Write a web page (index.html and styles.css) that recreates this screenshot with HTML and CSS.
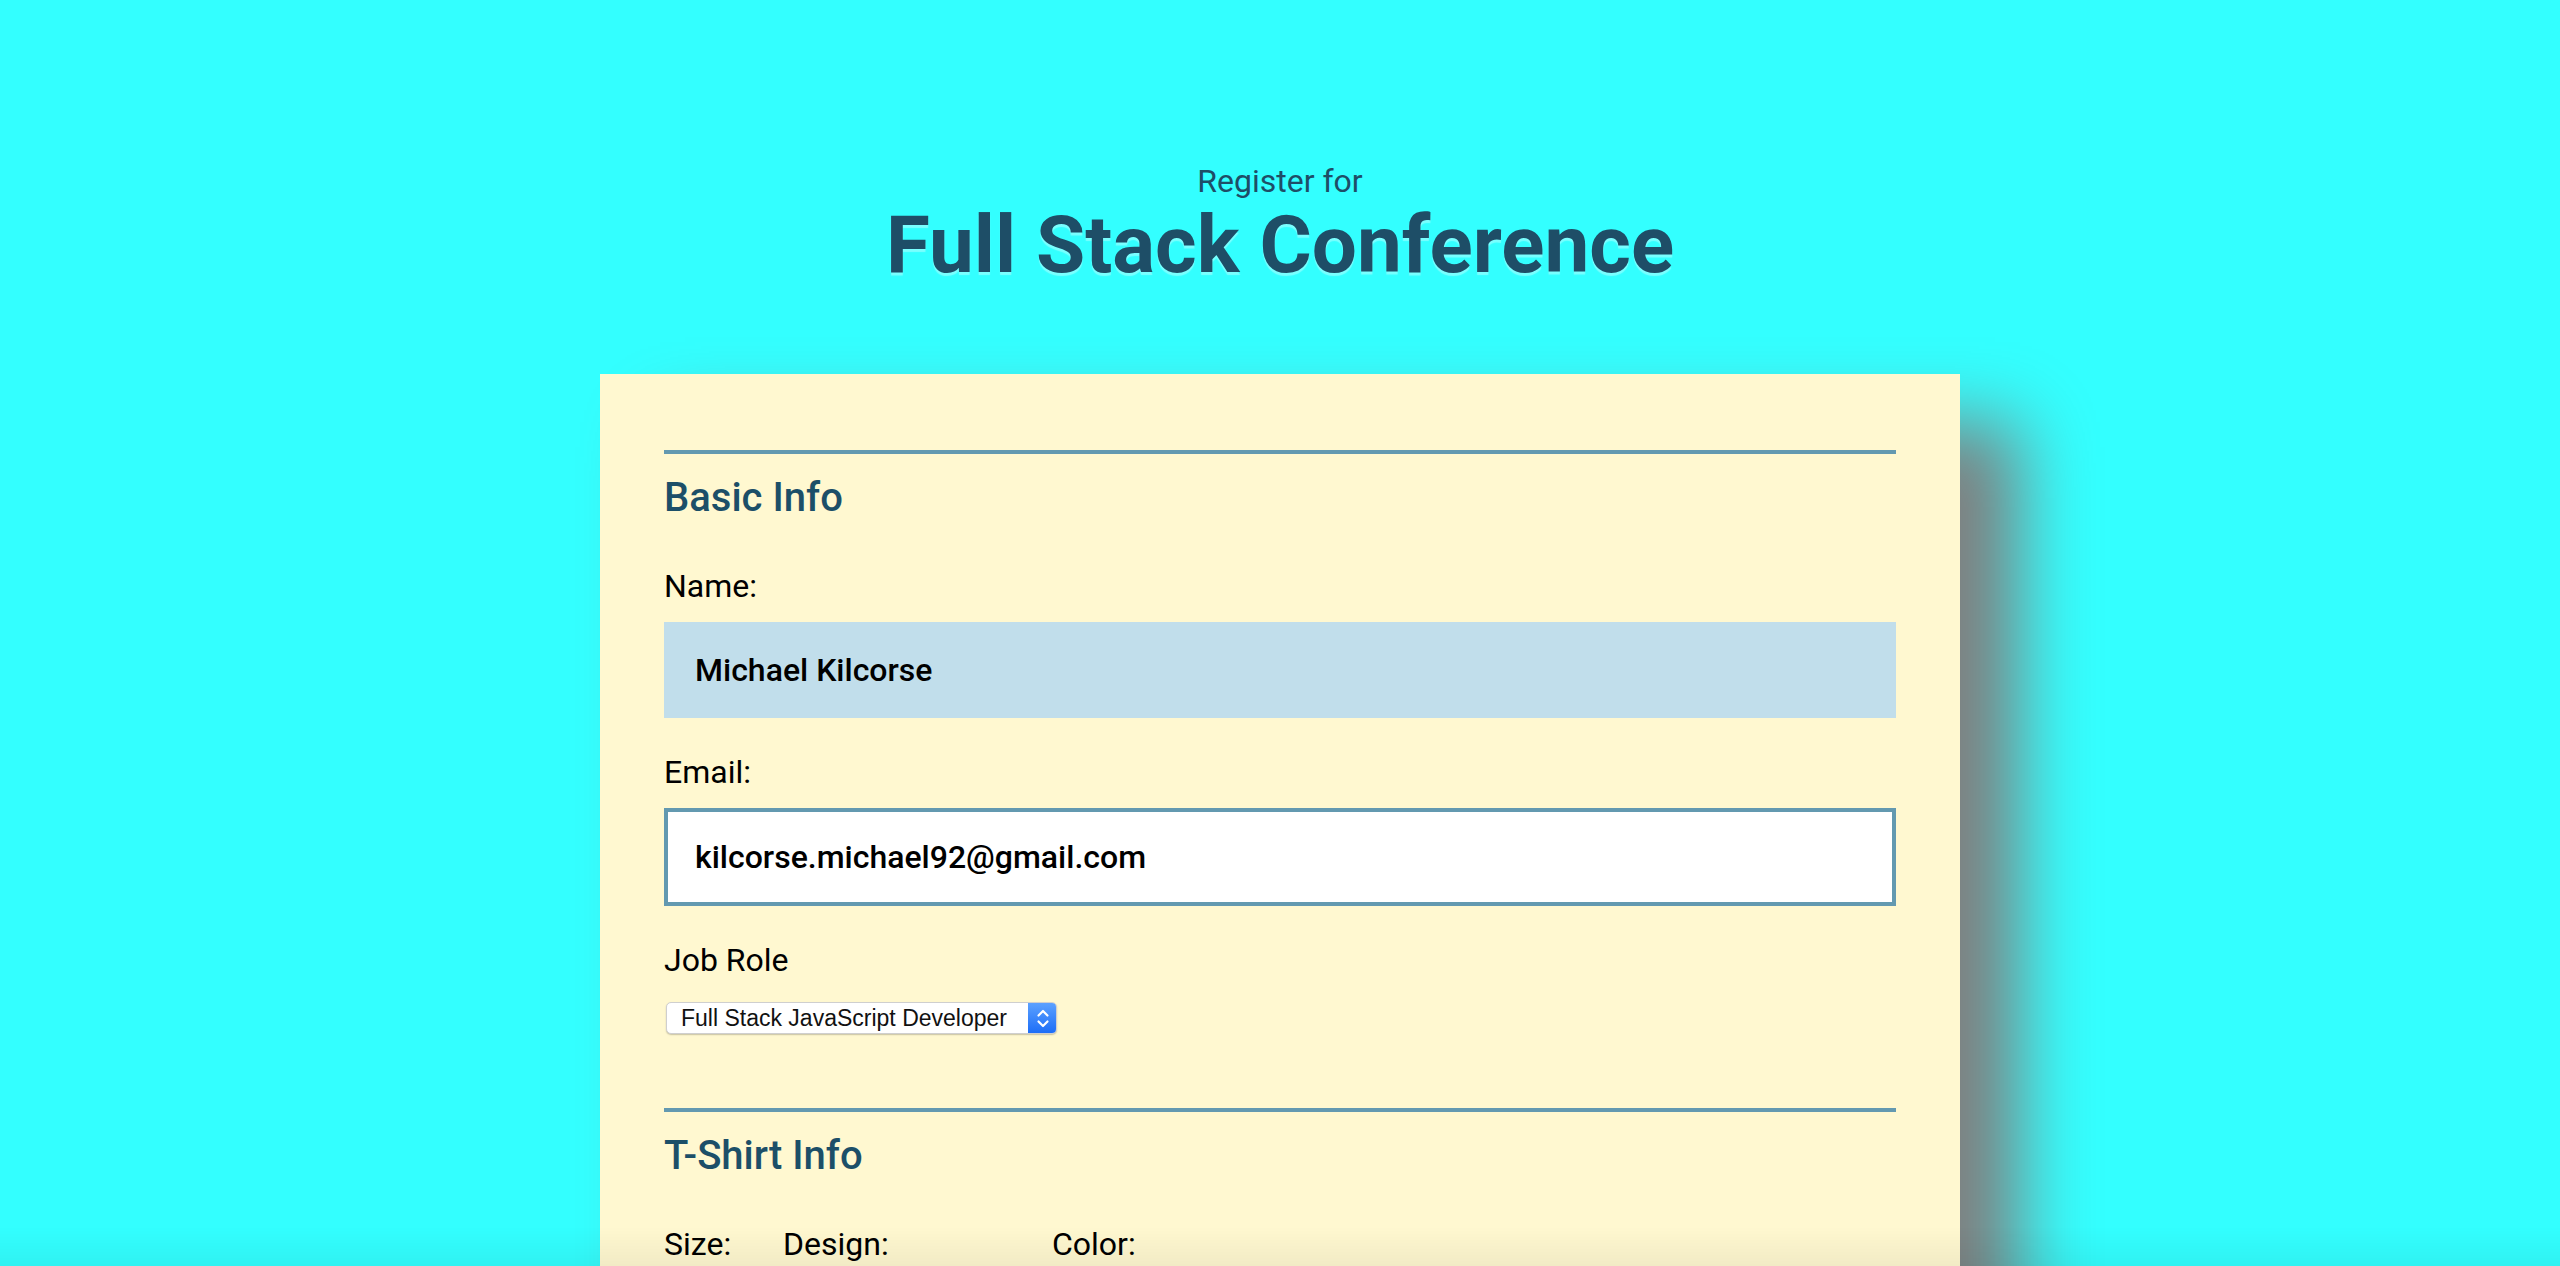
FILE: index.html
```html
<!DOCTYPE html>
<html lang="en">
<head>
<meta charset="utf-8">
<title>Full Stack Conference</title>
<link rel="stylesheet" href="styles.css">
</head>
<body>
<header class="page-header">
  <span class="kicker">Register for</span>
  <h1 class="title">Full Stack Conference</h1>
</header>
<form class="card">
  <section class="group">
    <h2 class="group-title">Basic Info</h2>
    <label class="field-label first" for="name">Name:</label>
    <input class="text-input" id="name" type="text" value="Michael Kilcorse">
    <label class="field-label" for="mail">Email:</label>
    <input class="text-input is-focused" id="mail" type="email" value="kilcorse.michael92@gmail.com">
    <label class="field-label role-label" for="role">Job Role</label>
    <div class="mac-select role-select">
      <select id="role" class="mac-select-field">
        <option>Full Stack JavaScript Developer</option>
        <option>Front End Developer</option>
        <option>Back End Developer</option>
      </select>
      <span class="stepper" aria-hidden="true">
        <svg width="14" height="21" viewBox="0 0 14 21"><path d="M2.5 7.5 L7 3 L11.5 7.5" fill="none" stroke="#fff" stroke-width="2.2" stroke-linecap="round" stroke-linejoin="round"/><path d="M2.5 13.5 L7 18 L11.5 13.5" fill="none" stroke="#fff" stroke-width="2.2" stroke-linecap="round" stroke-linejoin="round"/></svg>
      </span>
    </div>
  </section>
  <section class="group">
    <h2 class="group-title">T-Shirt Info</h2>
    <div class="shirt-row">
      <div class="shirt-col size-col">
        <label class="field-label first" for="size">Size:</label>
        <div class="mac-select">
          <select id="size" class="mac-select-field"><option>S</option><option>M</option></select>
          <span class="stepper" aria-hidden="true"><svg width="14" height="21" viewBox="0 0 14 21"><path d="M2.5 7.5 L7 3 L11.5 7.5" fill="none" stroke="#fff" stroke-width="2.2" stroke-linecap="round" stroke-linejoin="round"/><path d="M2.5 13.5 L7 18 L11.5 13.5" fill="none" stroke="#fff" stroke-width="2.2" stroke-linecap="round" stroke-linejoin="round"/></svg></span>
        </div>
      </div>
      <div class="shirt-col design-col">
        <label class="field-label first" for="design">Design:</label>
        <div class="mac-select">
          <select id="design" class="mac-select-field"><option>Select Theme</option></select>
          <span class="stepper" aria-hidden="true"><svg width="14" height="21" viewBox="0 0 14 21"><path d="M2.5 7.5 L7 3 L11.5 7.5" fill="none" stroke="#fff" stroke-width="2.2" stroke-linecap="round" stroke-linejoin="round"/><path d="M2.5 13.5 L7 18 L11.5 13.5" fill="none" stroke="#fff" stroke-width="2.2" stroke-linecap="round" stroke-linejoin="round"/></svg></span>
        </div>
      </div>
      <div class="shirt-col color-col">
        <label class="field-label first" for="color">Color:</label>
        <div class="mac-select">
          <select id="color" class="mac-select-field"><option>Please select a T-shirt theme</option></select>
          <span class="stepper" aria-hidden="true"><svg width="14" height="21" viewBox="0 0 14 21"><path d="M2.5 7.5 L7 3 L11.5 7.5" fill="none" stroke="#fff" stroke-width="2.2" stroke-linecap="round" stroke-linejoin="round"/><path d="M2.5 13.5 L7 18 L11.5 13.5" fill="none" stroke="#fff" stroke-width="2.2" stroke-linecap="round" stroke-linejoin="round"/></svg></span>
        </div>
      </div>
    </div>
  </section>
</form>
<div class="bottom-fade" aria-hidden="true"></div>
</body>
</html>
```

FILE: styles.css
```css
html {
  scrollbar-width: none;
  overflow: hidden;
}
html::-webkit-scrollbar { display: none; }

body {
  margin: 0;
  background: #33ffff;
  font-family: Roboto, "Liberation Sans", sans-serif;
  color: #000;
}

.page-header {
  padding-top: 162px;
  text-align: center;
  color: #1e4e67;
}

.kicker {
  display: block;
  font-size: 32px;
  line-height: 38px;
  font-weight: 400;
}

.title {
  margin: 5px 0 0;
  font-size: 80px;
  line-height: 80px;
  font-weight: 700;
  text-shadow: 0 3px 1px rgba(255, 255, 255, 0.35);
}

.card {
  width: 1360px;
  box-sizing: border-box;
  margin: 89px auto 0;
  padding: 76px 64px 200px;
  background: #fff8d0;
  box-shadow: 60px 48px 70px #808080;
}

.group {
  border-top: 4px solid #6399b0;
  padding-top: 24px;
}

.group + .group {
  margin-top: 74px;
}

.group-title {
  margin: 0;
  font-size: 40px;
  line-height: 40px;
  font-weight: 500;
  color: #1c4f68;
}

.field-label {
  display: block;
  font-size: 32px;
  line-height: 32px;
  margin: 38px 0 20px;
}

.field-label.first {
  margin-top: 52px;
}

.field-label.role-label {
  margin-bottom: 26px;
}

.text-input {
  display: block;
  width: 100%;
  box-sizing: border-box;
  height: 96px;
  margin: 0;
  padding: 0 29px;
  border: 2px solid #c1deeb;
  background: #c1deeb;
  font-family: Roboto, "Liberation Sans", sans-serif;
  font-size: 32px;
  font-weight: 500;
  color: #000;
  outline: none;
  border-radius: 0;
}

.text-input.is-focused {
  height: 98px;
  border: 4px solid #6399b0;
  padding: 0 27px;
  background: #fff;
}

.mac-select {
  display: flex;
  align-items: stretch;
  height: 32px;
  box-sizing: border-box;
  margin-left: 2px;
  background: #fff;
  border: 1px solid #cfcfcf;
  border-radius: 5px;
  box-shadow: 0 1px 1.5px rgba(0, 0, 0, 0.22);
  overflow: hidden;
}

.mac-select.role-select {
  width: 391px;
}

.mac-select-field {
  flex: 1;
  min-width: 0;
  appearance: none;
  -webkit-appearance: none;
  border: 0;
  background: transparent;
  padding: 0 0 0 14px;
  margin: 0;
  font-family: "Liberation Sans", Arial, sans-serif;
  font-size: 23px;
  color: #111;
  outline: none;
}

.stepper {
  width: 29px;
  flex: 0 0 29px;
  display: flex;
  align-items: center;
  justify-content: center;
  background: linear-gradient(#5ea3ff, #1b6cf7);
  margin: -1px -1px -1px 0;
  border-radius: 0 5px 5px 0;
}

.shirt-row {
  display: flex;
  gap: 24px;
}

.shirt-col .field-label {
  margin-bottom: 20px;
}

.size-col { width: 95px; }
.design-col { width: 245px; }
.color-col { width: 420px; }

.bottom-fade {
  position: fixed;
  left: 0;
  right: 0;
  bottom: 0;
  height: 40px;
  background: linear-gradient(rgba(0, 0, 0, 0), rgba(0, 0, 0, 0.05));
  pointer-events: none;
}
```
